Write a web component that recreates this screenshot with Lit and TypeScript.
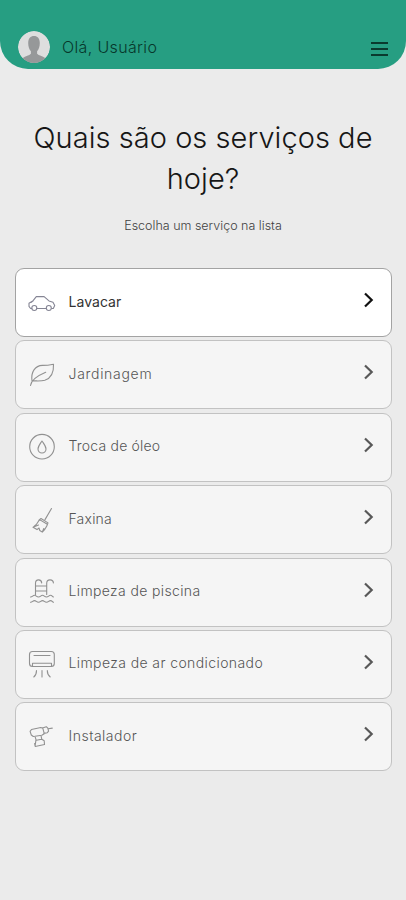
import { LitElement, html, css, svg } from "lit";
import { customElement, property } from "lit/decorators.js";
import { classMap } from "lit/directives/class-map.js";

const icons: Record<string, unknown> = {
  car: svg`<path d="M3.800 19.500H2.600L1 17.400v-3.200l4.100-2.500 3.200-4.100h7.800l4.900 4.300 4 1.400 1.700 3.100-1.400 3.100h-1.600M8.800 19.500h9.400M5.200 11.800l-2.300 1.700"/><circle cx="6.300" cy="19" r="2.500"/><circle cx="20.800" cy="19" r="2.500"/>`,
  leaf: svg`<path d="M2.500 24.500c.5-4 4.200-8.700 15.200-13.300M4 19.800C2.800 11 7 4.600 14.500 4.400c4 0 7-.4 11-1.200.4 8.300-2.500 14-8.700 16-4.600 1.300-9 .4-12.600.8"/>`,
  oil: svg`<circle cx="14" cy="13.700" r="12.300"/><path d="M14 8c-2.200 3.300-4 5.300-4 8a4 4 0 0 0 8 0c0-2.700-1.800-4.700-4-8z"/>`,
  broom: svg`<path d="M23.500 2.500 17 13.600M11.600 13.600l7.700 4.700M13 12.500l7 4.400-1.200 3.200c-1.200 2.500-2.300 4-4.500 6l-2.500-1.600-.8-2.500-2 1.600-4-2.300 1.400-1.200c2.700-1.500 3.500-4 5-6.500zM5 21.300l5.500-2.300M14.300 26l1.500-3.500"/>`,
  pool: svg`<path d="M7.500 16.500V5.200c0-4.400 6-4.400 6.200-.3M18.700 16.500V5.200c0-4.400 6.500-4.400 6.700-.3M7.500 8h11.200M7.500 13h11.200M2.500 19c2 0 2.300-1.700 4-1.700s2 1.700 4 1.700 2.300-1.700 4-1.700 2 1.700 4 1.700 2.300-1.700 4-1.700 1.600 1.400 3 1.700M2.500 24.300c2 0 2.300-1.700 4-1.700s2 1.700 4 1.700 2.300-1.700 4-1.700 2 1.700 4 1.700 2.300-1.700 4-1.700 1.600 1.400 3 1.700"/>`,
  air: svg`<rect x="1.500" y="1.500" width="24.800" height="15" rx="3"/><path d="M6 5.500h16M4.500 16.500v-3.300h19v3.300M8.500 20.500c0 3-.7 5-2.700 6.500M14 20.500V27M19.300 20.500c0 3 1 5 2.900 6.500"/>`,
  drill: svg`<path d="M3.500 6.500 12.800 4.500l2 .7 1.500 5.600-2.500 1.500-8.500 1.200-2-1.500-1.200-3.600zM14.500 5l3.800-1.300 1.500 1.500.8 3-1.300 1.500-3.500.7M20.300 5.800l4-.7M7 13.300l1 3.300-.9 6.200M13 12.500l.8 3.800 2.400 1.500.3 3.700-9.300 2-.6-3M8.500 17.300l5-1"/>`,
};

@customElement("service-row")
export class ServiceRow extends LitElement {
  @property() label = "";
  @property() icon = "";
  @property() spacing = "0";
  @property({ type: Boolean }) selected = false;

  static styles = css`
    :host { display: block; }
    .row {
      box-sizing: border-box; width: 100%; height: 69px;
      display: flex; align-items: center; padding: 0 16px 0 12px;
      font: 300 14px/20px Inter, "Open Sans", sans-serif; color: #555;
      background: #f5f5f5; border: 1px solid #c2c2c2; border-radius: 9px;
    }
    .row.selected { background: #fff; border-color: #a3a3a3; color: #333; font-weight: 400; }
    .icon { width: 28px; height: 28px; flex: none; fill: none; stroke: #919191; stroke-width: 1.100; stroke-linejoin: round; stroke-linecap: round; }
    .selected .icon { stroke: #858594; }
    .label { flex: 1; margin-left: 12.500px; padding-bottom: 2px; white-space: nowrap; }
    .chevron { width: 12px; height: 18px; flex: none; margin-bottom: 5px; fill: none; stroke: #585858; stroke-width: 2.200; }
    .selected .chevron { stroke: #111; }
  `;

  render() {
    return html`<div class=${classMap({ row: true, selected: this.selected })}>
      <svg class="icon" viewBox="0 0 28 28">${icons[this.icon]}</svg>
      <span class="label" style="letter-spacing:${this.spacing}px">${this.label}</span>
      <svg class="chevron" viewBox="0 0 12 18"><path d="M2 2.500 8.700 9 2 15.500"/></svg>
    </div>`;
  }
}

const services = [
  { label: "Lavacar", icon: "car", spacing: 0.05 },
  { label: "Jardinagem", icon: "leaf", spacing: 0.7 },
  { label: "Troca de óleo", icon: "oil", spacing: 0.2 },
  { label: "Faxina", icon: "broom", spacing: 0.2 },
  { label: "Limpeza de piscina", icon: "pool", spacing: 0.37 },
  { label: "Limpeza de ar condicionado", icon: "air", spacing: 0.4 },
  { label: "Instalador", icon: "drill", spacing: 0.5 },
];

@customElement("app-root")
export class AppRoot extends LitElement {
  static styles = css`
    :host { display: block; height: 900px; background: #ebebeb; font-family: Inter, "Open Sans", sans-serif; overflow: hidden; }
    .header {
      box-sizing: border-box; height: 69px; padding: 25px 18px 0 18px;
      display: flex; align-items: center; background: #269e82; border-radius: 0 0 28px 28px;
    }
    .avatar { width: 32px; height: 32px; flex: none; margin-bottom: 1px; }
    .hello { flex: 1; margin-left: 12px; font-size: 16px; letter-spacing: 0.350px; font-weight: 300; color: #06372b; }
    .menu { display: flex; flex-direction: column; gap: 4px; width: 17px; margin-top: 3px; }
    .bar { height: 2px; background: #0a3a2e; }
    .title { margin: 48px 0 0; text-align: center; font-size: 29px; letter-spacing: 0.050px; line-height: 41px; font-weight: 300; color: #161616; }
    .hint { margin: 17px 0 0; text-align: center; font-size: 12.500px; line-height: 20px; font-weight: 300; color: #3f3f3f; }
    .list { display: flex; flex-direction: column; gap: 3.400px; margin: 32px 14px 0 15px; }
  `;

  render() {
    return html`
      <header class="header">
        <svg class="avatar" viewBox="0 0 32 32">
          <defs><clipPath id="disc"><circle cx="16" cy="16" r="16"/></clipPath></defs>
          <g clip-path="url(#disc)">
            <circle cx="16" cy="16" r="16" fill="#dedede"/>
            <path fill="#969899" d="M10.200 12c0-4.500 2.300-7 5.800-7s5.800 2.500 5.800 7c0 3.500-1 6.500-2.700 8.300v2.500c1.600 2 5.600 2.200 8.100 4.200V32H4.800v-5c2.500-2 6.500-2.200 8.100-4.200v-2.500c-1.700-1.800-2.700-4.800-2.700-8.300z"/>
          </g>
        </svg>
        <span class="hello">Olá, Usuário</span>
        <div class="menu"><div class="bar"></div><div class="bar"></div><div class="bar"></div></div>
      </header>
      <h1 class="title">Quais são os serviços de<br>hoje?</h1>
      <p class="hint">Escolha um serviço na lista</p>
      <main class="list">
        ${services.map((s, i) => html`<service-row .label=${s.label} .icon=${s.icon} .spacing=${String(s.spacing)} .selected=${i === 0}></service-row>`)}
      </main>`;
  }
}
